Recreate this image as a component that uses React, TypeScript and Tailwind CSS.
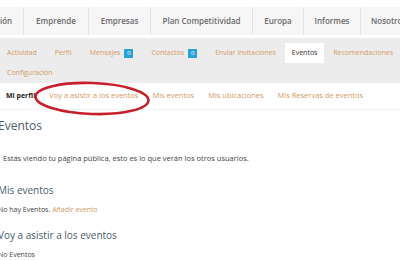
import React from "react";

const nav = [
  { t: "ión", w: "w-[24px]", j: "justify-start" },
  { t: "Emprende", w: "w-[65px]", j: "justify-center" },
  { t: "Empresas", w: "w-[62px]", j: "justify-center" },
  { t: "Plan Competitividad", w: "w-[102px]", j: "justify-center" },
  { t: "Europa", w: "w-[51px]", j: "justify-center" },
  { t: "Informes", w: "w-[57px]", j: "justify-center" },
  { t: "Nosotros", w: "w-[60px]", j: "justify-start pl-[10px]" },
];

function Badge() {
  return (
    <span className="ml-[4px] inline-flex h-[9px] w-[9px] items-center justify-center bg-[#27a3d8] text-[6px] leading-none text-white">
      0
    </span>
  );
}

export default function App() {
  const link = "text-[#d49a63]";
  return (
    <div
      className="relative h-[260px] w-[400px] overflow-hidden bg-white"
      style={{ fontFamily: '"Open Sans", "Liberation Sans", sans-serif' }}
    >
      {/* top nav */}
      <div className="mt-[7px] flex h-[28px] whitespace-nowrap bg-[#f6f6f6]">
        {nav.map((n, i) => (
          <div
            key={i}
            className={`flex shrink-0 items-center ${n.w} ${n.j} ${i < nav.length - 1 ? "border-r border-[#e2e2e2]" : ""} text-[8px] font-semibold text-[#6a6a6a]`}
          >
            {n.t}
          </div>
        ))}
      </div>

      {/* tabs band */}
      <div className="mt-[3px] bg-[#ececec] pt-[5px] text-[7px] whitespace-nowrap">
        <div className="-ml-[2px] flex h-[20px] items-stretch">
          <div className={`flex items-center px-[9px] ${link}`}>Actividad</div>
          <div className={`flex items-center px-[9px] ${link}`}>Perfil</div>
          <div className={`flex items-center px-[9px] ${link}`}>
            Mensajes
            <Badge />
          </div>
          <div className={`flex items-center px-[9px] ${link}`}>
            Contactos
            <Badge />
          </div>
          <div className={`flex items-center px-[9px] ${link}`}>Enviar invitaciones</div>
          <div className="flex items-center bg-white px-[7px] text-[#333]">Eventos</div>
          <div className={`flex items-center px-[9px] ${link}`}>Recomendaciones</div>
        </div>
        <div className="flex h-[20px] items-center">
          <div className={`px-[7px] ${link}`}>Configuración</div>
        </div>
      </div>

      {/* sub nav */}
      <div className="flex h-[27px] items-center gap-[14px] border-b border-[#f3f3f3] pl-[6px] text-[7.5px] whitespace-nowrap">
        <span className="text-[7px] font-bold text-[#222]">Mi perfil</span>
        <span className={link}>Voy a asistir a los eventos</span>
        <span className={link}>Mis eventos</span>
        <span className={link}>Mis ubicaciones</span>
        <span className={link}>Mis Reservas de eventos</span>
      </div>

      {/* content */}
      <div className="-ml-[2px] whitespace-nowrap">
        <div className="mt-[7px] text-[12px] leading-[18px] text-[#4b5a6c]">Eventos</div>
        <div className="mt-[16px] pl-[5px] text-[7.5px] leading-[14px] text-[#444]">
          Estás viendo tu página pública, esto es lo que verán los otros usuarios.
        </div>
        <div className="mt-[17px] text-[10px] leading-[16px] text-[#4b5a6c]">Mis eventos</div>
        <div className="mt-[5px] text-[7px] leading-[14px] text-[#444]">
          No hay Eventos. <span className={link}>Añadir evento</span>
        </div>
        <div className="mt-[10px] text-[10px] leading-[16px] text-[#4b5a6c]">
          Voy a asistir a los eventos
        </div>
        <div className="mt-[5px] text-[7px] leading-[14px] text-[#444]">No Eventos</div>
      </div>

      {/* red annotation ellipse */}
      <svg
        className="pointer-events-none absolute left-[33px] top-[80px]"
        width="120"
        height="38"
        viewBox="0 0 120 38"
      >
        <ellipse
          cx="59"
          cy="18.5"
          rx="56.5"
          ry="15.5"
          transform="rotate(2 59 18.5)"
          fill="none"
          stroke="#c7202a"
          strokeWidth="2.6"
        />
      </svg>
    </div>
  );
}
